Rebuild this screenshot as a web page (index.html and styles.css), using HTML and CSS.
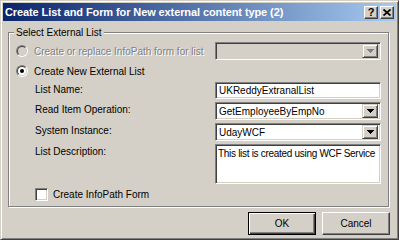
FILE: index.html
```html
<!DOCTYPE html>
<html lang="en">
<head>
    <meta charset="UTF-8">
    <title>Create List and Form for New external content type</title>
    <link rel="stylesheet" href="styles.css">
</head>
<body>
    <div class="window">
        <div class="titlebar">
            <span class="title">Create List and Form for New external content type (2)</span>
            <span class="caption-btns">
                <span class="cbtn help">?</span>
                <span class="cbtn">
                    <svg width="8" height="7" viewBox="0 0 8 7"><path d="M0.5 0.5L7.5 6.5M7.5 0.5L0.5 6.5" stroke="#000" stroke-width="1.7"/></svg>
                </span>
            </span>
        </div>
        <div class="client">
            <fieldset class="group">
                <legend>Select External List</legend>
                <div class="row disabled">
                    <span class="radio"><span class="ring"></span></span>
                    <span class="text">Create or replace InfoPath form for list</span>
                    <span class="field combo off">
                        <span class="value"></span>
                        <span class="drop"><svg width="7" height="4" viewBox="0 0 7 4"><path d="M0 0h7v1h-1v1h-1v1h-1v1h-1v-1h-1v-1h-1v-1h-1z" fill="#808080"/></svg></span>
                    </span>
                </div>
                <div class="row second">
                    <span class="radio"><span class="ring on"></span></span>
                    <span class="text">Create New External List</span>
                </div>
                <div class="form">
                    <span class="label">List Name:</span>
                    <span class="field input"><span class="value">UKReddyExtranalList</span></span>

                    <span class="label">Read Item Operation:</span>
                    <span class="field combo">
                        <span class="value">GetEmployeeByEmpNo</span>
                        <span class="drop"><svg width="7" height="4" viewBox="0 0 7 4"><path d="M0 0h7v1h-1v1h-1v1h-1v1h-1v-1h-1v-1h-1v-1h-1z" fill="#000"/></svg></span>
                    </span>

                    <span class="label">System Instance:</span>
                    <span class="field combo">
                        <span class="value">UdayWCF</span>
                        <span class="drop"><svg width="7" height="4" viewBox="0 0 7 4"><path d="M0 0h7v1h-1v1h-1v1h-1v1h-1v-1h-1v-1h-1v-1h-1z" fill="#000"/></svg></span>
                    </span>

                    <span class="label">List Description:</span>
                    <span class="field memo"><span class="value">This list is created using WCF Service</span></span>
                </div>
                <div class="check">
                    <span class="box"></span>
                    <span class="text">Create InfoPath Form</span>
                </div>
            </fieldset>
            <div class="buttons">
                <span class="button default">OK</span>
                <span class="button">Cancel</span>
            </div>
        </div>
    </div>
</body>
</html>
```

FILE: styles.css
```css
*{
    box-sizing: border-box;
}
body{
    margin: 0;
    background: #fff;
    font-family: "Liberation Sans", Arial, sans-serif;
    font-size: 10px;
    color: #000;
}
.window{
    width: 399px;
    height: 240px;
    background: #d4d0c8;
    border: 1px solid;
    border-color: #d4d0c8 #404040 #404040 #d4d0c8;
    box-shadow: inset 1px 1px #fff, inset -1px -1px #808080;
    padding: 2px;
    display: flex;
    flex-direction: column;
}
.titlebar{
    height: 18px;
    background: linear-gradient(to right, #0a246a, #a6caf0);
    display: flex;
    align-items: center;
    padding: 0 2px 0 2px;
}
.title{
    flex: 1;
    color: #fff;
    font-weight: bold;
    font-size: 11px;
    white-space: nowrap;
    letter-spacing: -0.1px;
}
.caption-btns{
    display: flex;
    gap: 2px;
}
.cbtn{
    width: 14px;
    height: 13px;
    background: #d4d0c8;
    border: 1px solid;
    border-color: #fff #404040 #404040 #fff;
    box-shadow: inset -1px -1px #808080;
    display: flex;
    align-items: center;
    justify-content: center;
    font-weight: bold;
    font-size: 11px;
    line-height: 1;
}
.cbtn svg{
    display: block;
}

.client{
    flex: 1;
    display: flex;
    flex-direction: column;
    padding: 5px 6px 0 5px;
}
.group{
    margin: 0 1px 0 0;
    padding: 3px 7px 5px 7px;
    border: 1px solid #808080;
    box-shadow: inset 1px 1px #fff, 1px 1px #fff;
    min-width: 0;
}
.group legend{
    padding: 0 2px;
    margin-left: -2px;
    line-height: 13px;
    background: #d4d0c8;
}

.row{
    display: flex;
    align-items: center;
    height: 18px;
}
.row.second{
    height: 14px;
    margin-top: 4px;
}
.row .text{
    margin-left: 6px;
}
.disabled .text{
    color: #808080;
    text-shadow: 1px 1px #fff;
}
.radio{
    width: 12px;
    height: 12px;
    border-radius: 50%;
    border: 1px solid;
    border-color: #808080 #fff #fff #808080;
}
.ring{
    display: flex;
    align-items: center;
    justify-content: center;
    width: 10px;
    height: 10px;
    border-radius: 50%;
    border: 1px solid;
    border-color: #404040 #d4d0c8 #d4d0c8 #404040;
    background: #fff;
}
.disabled .ring{
    background: #d4d0c8;
}
.ring.on::after{
    content: "";
    width: 4px;
    height: 4px;
    border-radius: 50%;
    background: #000;
}

.field{
    display: flex;
    align-items: center;
    background: #fff;
    border: 1px solid;
    border-color: #808080 #fff #fff #808080;
    box-shadow: inset 1px 1px #404040, inset -1px -1px #d4d0c8;
    padding: 0 2px 0 3px;
    white-space: nowrap;
    overflow: hidden;
}
.field .value{
    flex: 1;
}
.input{
    height: 17px;
}
.combo{
    height: 18px;
    width: 166px;
}
.row .combo{
    margin-left: auto;
}
.combo.off{
    background: #d4d0c8;
}
.drop{
    width: 16px;
    height: 14px;
    background: #d4d0c8;
    border: 1px solid;
    border-color: #d4d0c8 #404040 #404040 #d4d0c8;
    box-shadow: inset 1px 1px #fff, inset -1px -1px #808080;
    display: flex;
    align-items: center;
    justify-content: center;
}
.drop svg{
    display: block;
}
.memo{
    height: 40px;
    align-items: flex-start;
    padding: 3px 1px 0 2px;
    letter-spacing: -0.3px;
}

.form{
    margin-top: 4px;
    padding-left: 19px;
    display: grid;
    grid-template-columns: 1fr 166px;
    row-gap: 3px;
}
.label{
    line-height: 13px;
    padding-top: 1px;
}

.check{
    margin-top: 4px;
    padding-left: 19px;
    display: flex;
    align-items: center;
    height: 13px;
}
.box{
    width: 13px;
    height: 13px;
    background: #fff;
    border: 1px solid;
    border-color: #808080 #fff #fff #808080;
    box-shadow: inset 1px 1px #404040, inset -1px -1px #d4d0c8;
}
.check .text{
    margin-left: 5px;
}

.buttons{
    margin-top: 5px;
    display: flex;
    justify-content: flex-end;
    gap: 6px;
}
.button{
    width: 68px;
    height: 23px;
    display: flex;
    align-items: center;
    justify-content: center;
    border: 1px solid;
    border-color: #fff #404040 #404040 #fff;
    box-shadow: inset -1px -1px #808080;
}
.button.default{
    border-color: #000;
    box-shadow: inset 1px 1px #fff, inset -1px -1px #404040, inset -2px -2px #808080;
}
```
